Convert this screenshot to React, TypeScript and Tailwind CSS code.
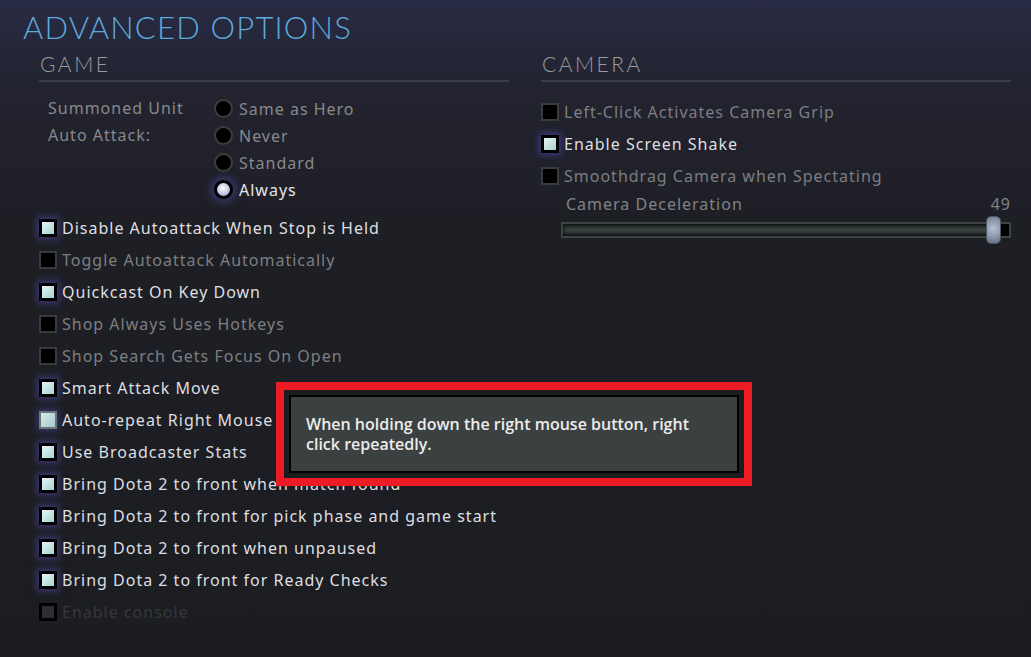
import React from "react";

type Kind = "checked" | "unchecked" | "disabled" | "hover";

function Box({ kind }: { kind: Kind }) {
  if (kind === "checked") {
    return (
      <div className="w-[18px] h-[18px] shrink-0 border-[3px] border-black bg-[linear-gradient(135deg,#e4f4f4,#a9d2d2)] shadow-[0_0_7px_2px_rgba(85,80,200,0.55)]" />
    );
  }
  if (kind === "hover") {
    return (
      <div className="w-[18px] h-[18px] shrink-0 border-[2px] border-[#6c7474] bg-[linear-gradient(135deg,#d6ecec,#a4caca)] shadow-[0_0_7px_2px_rgba(85,80,200,0.45)]" />
    );
  }
  if (kind === "disabled") {
    return <div className="w-[18px] h-[18px] shrink-0 border-[3px] border-black bg-[#2c2d30]" />;
  }
  return <div className="w-[18px] h-[18px] shrink-0 border-[2px] border-[#383c3c] bg-black" />;
}

function Check({ kind, label }: { kind: Kind; label: string }) {
  const color =
    kind === "checked" || kind === "hover"
      ? "text-[#dedfe0]"
      : kind === "disabled"
      ? "text-[#36383c]"
      : "text-[#7c7e81]";
  return (
    <div className="h-[32px] flex items-center gap-[5px]">
      <Box kind={kind} />
      <span className={`text-[16px] tracking-[1px] whitespace-nowrap ${color}`}>{label}</span>
    </div>
  );
}

function Radio({ on, label }: { on?: boolean; label: string }) {
  return (
    <div className="h-[27px] flex items-center gap-[6px]">
      {on ? (
        <div className="w-[19px] h-[19px] rounded-full border-[3px] border-black bg-[radial-gradient(circle_at_45%_40%,#ffffff,#b8c4de_60%,#8e9ac0)] shadow-[0_0_8px_3px_rgba(85,80,200,0.5)]" />
      ) : (
        <div className="w-[19px] h-[19px] rounded-full border-[2px] border-[#3a3e3e] bg-black" />
      )}
      <span className={`text-[16px] tracking-[1px] ${on ? "text-[#e6e6e8]" : "text-[#88898c]"}`}>{label}</span>
    </div>
  );
}

function Header({ title }: { title: string }) {
  return (
    <div className="h-[34px] border-b-2 border-[#3c3d42] flex items-center">
      <span className="text-[21px] font-light tracking-[2.5px] text-[#9a9b9e] leading-none pl-[1px] pb-[1px]" style={{ fontFamily: 'Lato, "Noto Sans", sans-serif' }}>{title}</span>
    </div>
  );
}

export default function App() {
  const left: [Kind, string][] = [
    ["checked", "Disable Autoattack When Stop is Held"],
    ["unchecked", "Toggle Autoattack Automatically"],
    ["checked", "Quickcast On Key Down"],
    ["unchecked", "Shop Always Uses Hotkeys"],
    ["unchecked", "Shop Search Gets Focus On Open"],
    ["checked", "Smart Attack Move"],
    ["hover", "Auto-repeat Right Mouse"],
    ["checked", "Use Broadcaster Stats"],
    ["checked", "Bring Dota 2 to front when match found"],
    ["checked", "Bring Dota 2 to front for pick phase and game start"],
    ["checked", "Bring Dota 2 to front when unpaused"],
    ["checked", "Bring Dota 2 to front for Ready Checks"],
    ["disabled", "Enable console"],
  ];
  return (
    <div
      className="relative w-[1031px] h-[657px] overflow-hidden bg-[linear-gradient(180deg,#282b44_0%,#22232f_90px,#1e1f25_220px,#1c1d21_100%)]"
      style={{ fontFamily: '"Noto Sans", "Open Sans", sans-serif' }}
    >
      <div className="pl-[23px] pt-[12px] h-[48px]">
        <span className="text-[31px] font-light leading-none tracking-[1.2px] text-[#5fa8dc]" style={{ fontFamily: 'Lato, "Noto Sans", sans-serif' }}>
          ADVANCED OPTIONS
        </span>
      </div>
      <div className="flex gap-[32px] pl-[39px] pr-[20px]">
        <div className="w-[470px] flex flex-col">
          <Header title="GAME" />
          <div className="flex mt-[13px] pl-[9px]">
            <div className="w-[166px] text-[16px] tracking-[1px] text-[#88898c] leading-[27px]">
              Summoned Unit
              <br />
              Auto Attack:
            </div>
            <div className="flex flex-col">
              <Radio label="Same as Hero" />
              <Radio label="Never" />
              <Radio label="Standard" />
              <Radio on label="Always" />
            </div>
          </div>
          <div className="flex flex-col mt-[9px]">
            {left.map(([k, l]) => (
              <Check key={l} kind={k} label={l} />
            ))}
          </div>
        </div>
        <div className="w-[470px] flex flex-col">
          <Header title="CAMERA" />
          <div className="flex flex-col mt-[14px]">
            <Check kind="unchecked" label="Left-Click Activates Camera Grip" />
            <Check kind="checked" label="Enable Screen Shake" />
            <Check kind="unchecked" label="Smoothdrag Camera when Spectating" />
          </div>
          <div className="pl-[20px] flex flex-col">
            <div className="h-[24px] flex items-center justify-between text-[16px] tracking-[1px] text-[#808285]">
              <span className="pl-[5px]">Camera Deceleration</span>
              <span>49</span>
            </div>
            <div className="relative mt-[6px] h-[16px] border-2 border-[#3d4343] bg-black">
              <div className="h-full w-[97%] bg-[linear-gradient(180deg,#1c2220,#3a4644_50%,#1c2220)] shadow-[inset_0_0_4px_rgba(0,0,0,0.9)]" />
              <div className="absolute left-[423px] top-[-8px] w-[15px] h-[28px] rounded-[5px] bg-[radial-gradient(circle_at_50%_45%,#b6c2d2,#7d8a9c_70%,#5d6878)] border border-[#4b5464]" />
            </div>
          </div>
        </div>
      </div>

      <div className="absolute left-[276px] top-[382px] w-[476px] h-[104px] border-[8px] border-[#ed1c24] bg-[#1a1c1e] p-[5px]">
        <div className="w-full h-full border-2 border-black bg-[#3b4041] pl-[15px] pt-[17px]">
          <p className="text-[16px] leading-[20px] font-semibold text-[#ececec]" style={{ fontFamily: '"Open Sans", "Noto Sans", sans-serif' }}>
            When holding down the right mouse button, right
            <br />
            click repeatedly.
          </p>
        </div>
      </div>
    </div>
  );
}
